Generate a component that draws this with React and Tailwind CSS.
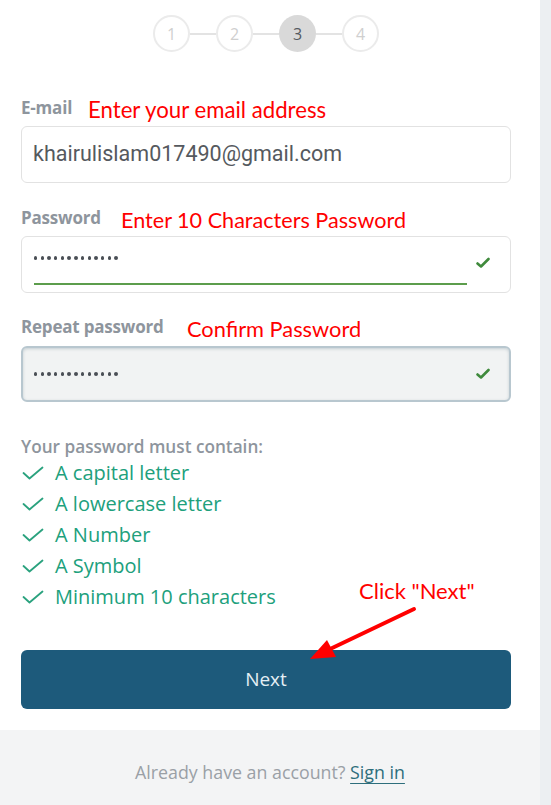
import React from "react";

const ui = { fontFamily: '"Open Sans", "Noto Sans", sans-serif' };
const note = { fontFamily: 'Lato, "Open Sans", sans-serif' };

function Step({ n, active }) {
  return (
    <div
      className={
        "w-[37px] h-[37px] rounded-full flex items-center justify-center text-[16px] " +
        (active
          ? "bg-[#d9d9d9] text-[#555a60]"
          : "border-2 border-[#ebebeb] bg-white text-[#cfcfcf]")
      }
      style={ui}
    >
      {n}
    </div>
  );
}

function Line() {
  return <div className="w-[26px] h-[2px] bg-[#e3e3e3]" />;
}

function SmallCheck() {
  return (
    <svg width="14" height="12" viewBox="0 0 14 12">
      <path d="M1.5 6.5 L5 9.5 L12.5 2" fill="none" stroke="#3f8a3c" strokeWidth="2.6" strokeLinecap="round" strokeLinejoin="round" />
    </svg>
  );
}

function ListCheck() {
  return (
    <svg width="22" height="14" viewBox="0 0 22 14">
      <path d="M1.5 7 L7.5 12.5 L20.5 1.5" fill="none" stroke="#2aa27e" strokeWidth="1.8" strokeLinecap="round" strokeLinejoin="round" />
    </svg>
  );
}

function Dots() {
  return (
    <div className="flex gap-[3.3px]">
      {Array.from({ length: 13 }).map((_, i) => (
        <span key={i} className="w-[3.4px] h-[3.4px] rounded-full bg-[#4a4f55]" />
      ))}
    </div>
  );
}

export default function App() {
  const items = [
    "A capital letter",
    "A lowercase letter",
    "A Number",
    "A Symbol",
    "Minimum 10 characters",
  ];
  return (
    <div className="relative flex w-[551px] h-[805px] bg-white overflow-hidden">
      <div className="w-[540px] flex flex-col bg-white">
        <div className="flex-1 pl-[21px] pr-[29px]">
          {/* stepper */}
          <div className="flex items-center justify-center pt-[15px]">
            <Step n="1" />
            <Line />
            <Step n="2" />
            <Line />
            <Step n="3" active />
            <Line />
            <Step n="4" />
          </div>

          {/* email */}
          <div className="relative mt-[46px] h-[20px] flex items-center">
            <span className="text-[17px] font-bold text-[#8e959d] tracking-[-0.2px]" style={ui}>E-mail</span>
            <span className="absolute left-[67px] top-[-3px] text-[22.2px] leading-[30px] text-[#ff0000] whitespace-nowrap" style={note}>
              Enter your email address
            </span>
          </div>
          <div className="mt-[8px] h-[57px] border border-[#e2e2e2] rounded-[6px] flex items-center pl-[11px]">
            <span className="text-[21.5px] text-[#55595e]" style={{ fontFamily: 'Roboto, sans-serif' }}>
              khairulislam017490@gmail.com
            </span>
          </div>

          {/* password */}
          <div className="relative mt-[25px] h-[20px] flex items-center">
            <span className="text-[17px] font-bold text-[#8e959d] tracking-[-0.2px]" style={ui}>Password</span>
            <span className="absolute left-[100px] top-[-3px] text-[21.6px] leading-[30px] text-[#ff0000] whitespace-nowrap" style={note}>
              Enter 10 Characters Password
            </span>
          </div>
          <div className="relative mt-[8px] h-[57px] border border-[#e2e2e2] rounded-[6px] flex items-center pl-[12px] pr-[20px]">
            <div className="flex-1 flex flex-col">
              <div className="h-[20px] flex items-center mt-[4px]">
                <Dots />
              </div>
              <div className="mt-[15px] mr-[9px] h-[2px] bg-[#5c9d4c]" />
            </div>
            <div className="mb-[3px]">
              <SmallCheck />
            </div>
          </div>

          {/* repeat password */}
          <div className="relative mt-[24px] h-[20px] flex items-center">
            <span className="text-[17px] font-bold text-[#8e959d] tracking-[-0.2px]" style={ui}>Repeat password</span>
            <span className="absolute left-[166px] top-[-3px] text-[21.8px] leading-[30px] text-[#ff0000] whitespace-nowrap" style={note}>
              Confirm Password
            </span>
          </div>
          <div className="mt-[9px] h-[56px] border-2 border-[#b8c7cf] rounded-[6px] bg-[#f1f3f3] shadow-[inset_0_1px_3px_rgba(60,90,110,0.25)] flex items-center pl-[11px] pr-[19px]">
            <div className="flex-1">
              <Dots />
            </div>
            <SmallCheck />
          </div>

          {/* requirements */}
          <div className="mt-[33px] h-[24px] flex items-center text-[17.2px] font-semibold text-[#8e959d]" style={ui}>
            Your password must contain:
          </div>
          <div className="mt-[-2px] flex flex-col">
            {items.map((t) => (
              <div key={t} className="h-[31px] flex items-center">
                <div className="w-[34px] pl-[1px]">
                  <ListCheck />
                </div>
                <span className="text-[20px] font-medium text-[#20a07c]" style={ui}>{t}</span>
              </div>
            ))}
          </div>

          {/* button */}
          <div className="mt-[38px] h-[59px] rounded-[6px] bg-[#1d5a7b] flex items-center justify-center">
            <span className="text-[19px] text-[#e4eff5]" style={ui}>Next</span>
          </div>
        </div>

        {/* footer */}
        <div className="h-[75px] bg-[#f3f4f5] flex items-center justify-center pt-[10px]">
          <span className="text-[17.8px] text-[#9aa0a6]" style={ui}>
            Already have an account?{" "}
            <span className="text-[#2d6e7c] underline decoration-[#2d6e7c] underline-offset-[4px]">Sign in</span>
          </span>
        </div>
      </div>
      <div className="flex-1 bg-[#eceff2]" />

      {/* annotation: Click "Next" with arrow */}
      <span className="absolute left-[359px] top-[576px] text-[22px] leading-[30px] text-[#ff0000] whitespace-nowrap" style={note}>
        Click "Next"
      </span>
      <svg className="absolute left-0 top-0 pointer-events-none" width="551" height="805">
        <line x1="414" y1="609" x2="328" y2="650" stroke="#ff0000" strokeWidth="4" strokeLinecap="round" />
        <polygon points="310,659 327,640 336,657" fill="#ff0000" />
      </svg>
    </div>
  );
}
